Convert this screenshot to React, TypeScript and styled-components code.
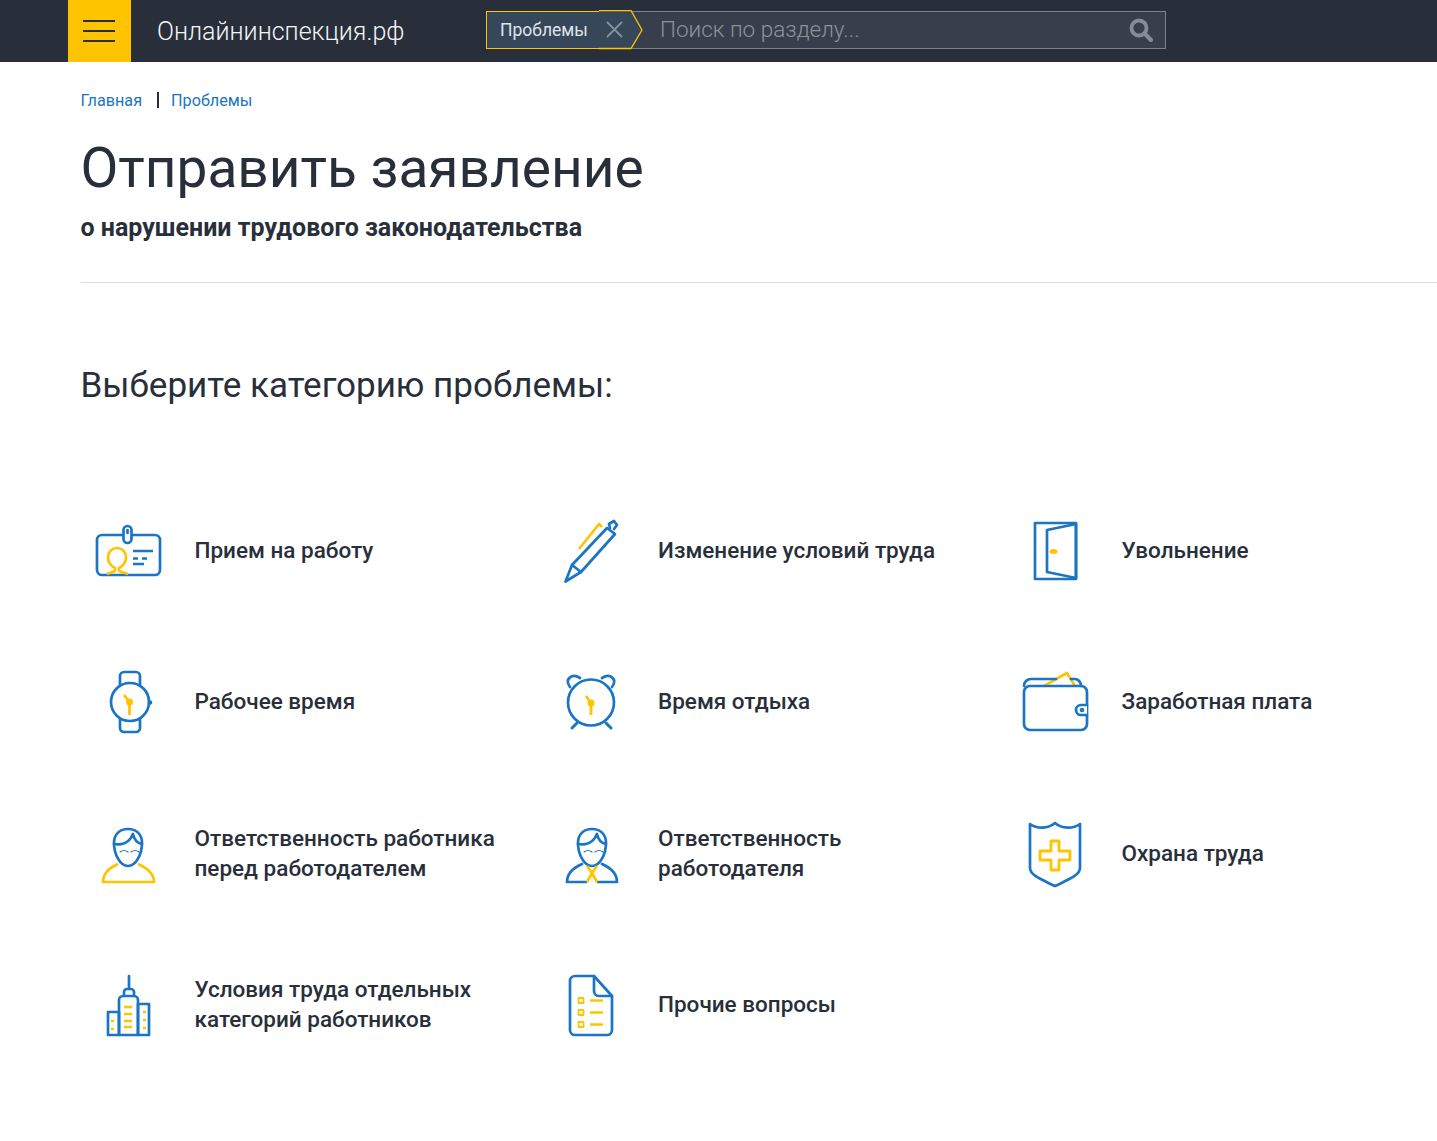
import type { ReactNode } from 'react'
import styled, { createGlobalStyle } from 'styled-components'

const BLUE = '#1b75c4'
const YELLOW = '#ffc400'

const GlobalStyle = createGlobalStyle`
  html, body {
    margin: 0;
    padding: 0;
    background: #fff;
    color: #282f3a;
    font-family: Roboto, "Liberation Sans", sans-serif;
  }
`

type Category = {
  title: ReactNode
  view: string
  icon: ReactNode
}

const Blue = ({ children, width = 2.7 }: { children: ReactNode; width?: number }) => (
  <g fill="none" stroke={BLUE} strokeWidth={width} strokeLinecap="round" strokeLinejoin="round">
    {children}
  </g>
)

const Yellow = ({ children, width = 2.7 }: { children: ReactNode; width?: number }) => (
  <g fill="none" stroke={YELLOW} strokeWidth={width} strokeLinejoin="round">
    {children}
  </g>
)

const face = (
  <>
    <path d="M29 27C29 18 35 13 43 13s14 5 14 14c0 11-6 23-14 23S29 38 29 27Z" />
    <path d="M29 28c6 1 15 0 19-10 1 5 4 9 9 10" />
    <path d="M35 36q4-3 8 0M46 36q4-3 8 0" strokeWidth={1.2} />
  </>
)

const categories: Category[] = [
  {
    title: 'Прием на работу',
    view: '0 0 90 80',
    icon: (
      <>
        <Blue>
          <rect x="12" y="25" width="63" height="40" rx="5" />
          <rect x="38.5" y="16" width="8" height="17" rx="4" fill="#fff" />
          <path d="M42.500 20v3" />
          <path d="M48 41h20M48 48.500h5M57 48.500h5M48 54h11" strokeLinecap="butt" />
        </Blue>
        <Yellow>
          <path d="M22 64l8-3v-3c-4-2-7-6-7-11a9 9 0 0 1 18 0c0 5-3 9-7 11v3l9 3" />
        </Yellow>
      </>
    ),
  },
  {
    title: 'Изменение условий труда',
    view: '-2 0 90 80',
    icon: (
      <>
        <Yellow>
          <path d="M29 39L49 14l3 3" />
        </Yellow>
        <Blue>
          <path d="M15.500 71.500L22 55l35-37 8 6-34 38Z" />
          <path d="M22 55l9 7" />
          <path d="M60 18l-1-4 5-3 3 4-3 4" />
        </Blue>
      </>
    ),
  },
  {
    title: 'Увольнение',
    view: '-3 0 90 80',
    icon: (
      <>
        <Blue>
          <path d="M20 13h41v56H20Z" />
          <path d="M61 14l-29 6v42l29 6Z" />
        </Blue>
        <ellipse cx="38.500" cy="41.500" rx="4" ry="2.500" fill={YELLOW} />
      </>
    ),
  },
  {
    title: 'Рабочее время',
    view: '0 -1 90 80',
    icon: (
      <>
        <Blue>
          <circle cx="45" cy="40" r="19" />
          <path d="M35 23v-9a4 4 0 0 1 4-4h12a4 4 0 0 1 4 4v9M35 57v9a4 4 0 0 0 4 4h12a4 4 0 0 0 4-4v-9" />
          <circle cx="65" cy="40.500" r="1" fill={BLUE} />
        </Blue>
        <Yellow width={2.8}>
          <path d="M44.500 40v13M39 33l5.500 7" />
        </Yellow>
        <circle cx="44.500" cy="40" r="3.500" fill={YELLOW} />
      </>
    ),
  },
  {
    title: 'Время отдыха',
    view: '-2 -1 90 80',
    icon: (
      <>
        <Blue>
          <circle cx="41" cy="40.500" r="23" />
          <path d="M20 25c-6-8 2-14 10-9M62 25c6-8-2-14-10-9" />
          <path d="M22 66l5-5M61 66l-5-5" strokeWidth={3} />
        </Blue>
        <Yellow width={2.8}>
          <path d="M41 41v12M36 34l5 7" />
        </Yellow>
        <circle cx="41" cy="41" r="3.500" fill={YELLOW} />
      </>
    ),
  },
  {
    title: 'Заработная плата',
    view: '-3 -1 90 80',
    icon: (
      <>
        <Yellow>
          <path d="M29 24l23-13 8 13" />
        </Yellow>
        <Blue>
          <path d="M9 24c0-4 3-7 7-7h25M56 17h4c3 0 6 3 6 7" />
          <rect x="9" y="24" width="63" height="44" rx="6" />
          <path d="M72 43h-6a5 5 0 0 0 0 10h6" fill="#fff" />
          <circle cx="67" cy="48" r="1" />
        </Blue>
      </>
    ),
  },
  {
    title: (
      <>
        Ответственность работника
        <br />
        перед работодателем
      </>
    ),
    view: '0 -3 90 80',
    icon: (
      <>
        <Yellow>
          <path d="M33 48C24 52 18 58 18 66h51c0-8-7-14-16-18" />
        </Yellow>
        <Blue>{face}</Blue>
      </>
    ),
  },
  {
    title: (
      <>
        Ответственность
        <br />
        работодателя
      </>
    ),
    view: '-2 -3 90 80',
    icon: (
      <>
        <Blue>
          <path d="M32 48C23 52 17 58 17 66h19M48 66h19c0-8-6-14-15-18" />
          <g transform="translate(-1 0)">{face}</g>
        </Blue>
        <Yellow>
          <path d="M37 50l5 7 5-7M42 57l-5 9M42 57l5 9" />
        </Yellow>
      </>
    ),
  },
  {
    title: 'Охрана труда',
    view: '-3 -3 90 80',
    icon: (
      <>
        <Blue>
          <path d="M15 8c7 5 18 5 25-1 7 6 18 6 25 1v44c0 8-15 13-25 18-10-5-25-10-25-18Z" />
        </Blue>
        <Yellow width={2.8}>
          <path d="M36 25h8v10h11v9H44v10h-8V44H25v-9h11Z" />
        </Yellow>
      </>
    ),
  },
  {
    title: (
      <>
        Условия труда отдельных
        <br />
        категорий работников
      </>
    ),
    view: '0 -1 90 80',
    icon: (
      <>
        <Blue>
          <path d="M44 11v13" />
          <path d="M39 31v-4a3 3 0 0 1 3-3h4a3 3 0 0 1 3 3v4" />
          <path d="M34 70V35a4 4 0 0 1 4-4h11a4 4 0 0 1 4 4v35Z" />
          <path d="M53 39h11v31H53ZM34 47H23v23h11Z" />
        </Blue>
        <Yellow>
          <path d="M39 42h8M39 49h8M39 56h8M39 62h8M58 47h3M58 55h3M58 63h3M26 56h3M26 64h3" />
        </Yellow>
      </>
    ),
  },
  {
    title: 'Прочие вопросы',
    view: '-2 -1 90 80',
    icon: (
      <>
        <Blue>
          <path d="M25 11h19l18 20v34a5 5 0 0 1-5 5H25a5 5 0 0 1-5-5V16a5 5 0 0 1 5-5Z" />
          <path d="M44 11v15a5 5 0 0 0 5 5h13" />
        </Blue>
        <Yellow width={1.8}>
          <path d="M28.500 33h5v5h-5ZM28.500 45h5v5h-5ZM28.500 57h5v5h-5Z" />
          <path d="M40 35.500h13M40 47.500h13M40 59.500h13" strokeWidth={2.4} />
        </Yellow>
      </>
    ),
  },
]

export default function App() {
  return (
    <>
      <GlobalStyle />
      <Header>
        <Burger>
          <span />
          <span />
          <span />
        </Burger>
        <Logo>Онлайнинспекция.рф</Logo>
        <Search>
          <Chip>Проблемы</Chip>
          <ChipEnd viewBox="0 0 44 40" aria-hidden>
            <path d="M0 .5H32L43 20 32 38.500H0" fill="#36475a" stroke={YELLOW} strokeWidth="1.300" />
            <path d="M8 12l15 15M23 12L8 27" stroke="#85909c" strokeWidth="1.800" fill="none" />
          </ChipEnd>
          <Placeholder>Поиск по разделу...</Placeholder>
          <SearchIcon viewBox="0 0 24 24" aria-hidden>
            <circle cx="10" cy="10" r="7.500" fill="none" stroke="#858c95" strokeWidth="3.800" />
            <path d="M15.500 15.500L22 22" stroke="#858c95" strokeWidth="4.200" strokeLinecap="round" />
          </SearchIcon>
        </Search>
      </Header>
      <Main>
        <Crumbs>
          <Crumb>Главная</Crumb>
          <CrumbLine />
          <Crumb>Проблемы</Crumb>
        </Crumbs>
        <Title>Отправить заявление</Title>
        <Subtitle>о нарушении трудового законодательства</Subtitle>
        <Divider />
        <SectionTitle>Выберите категорию проблемы:</SectionTitle>
        <Grid>
          {categories.map((c, i) => (
            <Item key={i}>
              <ItemIcon viewBox={c.view} aria-hidden>
                {c.icon}
              </ItemIcon>
              <ItemTitle>{c.title}</ItemTitle>
            </Item>
          ))}
        </Grid>
      </Main>
    </>
  )
}

const Header = styled.header`
  display: flex;
  align-items: center;
  height: 62px;
  padding-left: 68px;
  background: #282f3a;
`

const Burger = styled.div`
  display: flex;
  flex-direction: column;
  justify-content: center;
  gap: 8px;
  width: 63px;
  height: 62px;
  padding: 0 16px 0 15px;
  box-sizing: border-box;
  background: ${YELLOW};

  span {
    display: block;
    height: 2px;
    background: #282f3a;
  }
`

const Logo = styled.div`
  width: 355px;
  padding-left: 26px;
  box-sizing: border-box;
  color: #f2f5f8;
  font-size: 25px;
  font-weight: 300;
  white-space: nowrap;
`

const Search = styled.div`
  display: flex;
  align-items: center;
  width: 680px;
  height: 38px;
  margin-bottom: 2px;
  box-sizing: border-box;
  border: 1px solid #7d838b;
  background: #373f4d;
`

const Chip = styled.div`
  flex: none;
  display: flex;
  align-items: center;
  width: 113px;
  height: 38px;
  margin-left: -1px;
  padding-left: 13px;
  box-sizing: border-box;
  border: 1px solid ${YELLOW};
  border-right: 0;
  background: #36475a;
  color: #dfe4ea;
  font-size: 17.500px;
`

const ChipEnd = styled.svg`
  flex: none;
  width: 44px;
  height: 40px;
`

const Placeholder = styled.div`
  flex: 1;
  padding: 0 0 2px 17px;
  color: #8d929a;
  font-size: 22.500px;
  font-weight: 300;
`

const SearchIcon = styled.svg`
  flex: none;
  width: 24px;
  height: 24px;
  margin-right: 12px;
`

const Main = styled.main`
  padding: 28px 0 62px 80.500px;
`

const Crumbs = styled.nav`
  display: flex;
  align-items: center;
  height: 20px;
`

const Crumb = styled.a`
  color: #1b75c4;
  font-size: 16.200px;
`

const CrumbLine = styled.span`
  width: 2px;
  height: 16px;
  margin: 0 12px 0 15px;
  background: #282f3a;
`

const Title = styled.h1`
  margin: 26px 0 0;
  font-size: 55px;
  line-height: 64px;
  font-weight: 400;
`

const Subtitle = styled.div`
  margin-top: 13px;
  font-size: 25px;
  line-height: 30px;
  font-weight: 700;
`

const Divider = styled.div`
  height: 1px;
  margin-top: 39px;
  background: #dedede;
`

const SectionTitle = styled.h2`
  margin: 81px 0 0;
  font-size: 35px;
  line-height: 44px;
  font-weight: 400;
`

const Grid = styled.div`
  display: grid;
  grid-template-columns: repeat(3, 463.500px);
  grid-auto-rows: 151.500px;
  margin-top: 66px;
`

const Item = styled.div`
  display: flex;
  align-items: center;
`

const ItemIcon = styled.svg`
  flex: none;
  width: 90px;
  height: 80px;
  margin: 0 20px 0 4px;
`

const ItemTitle = styled.div`
  font-size: 22.500px;
  line-height: 30px;
  font-weight: 500;
`
